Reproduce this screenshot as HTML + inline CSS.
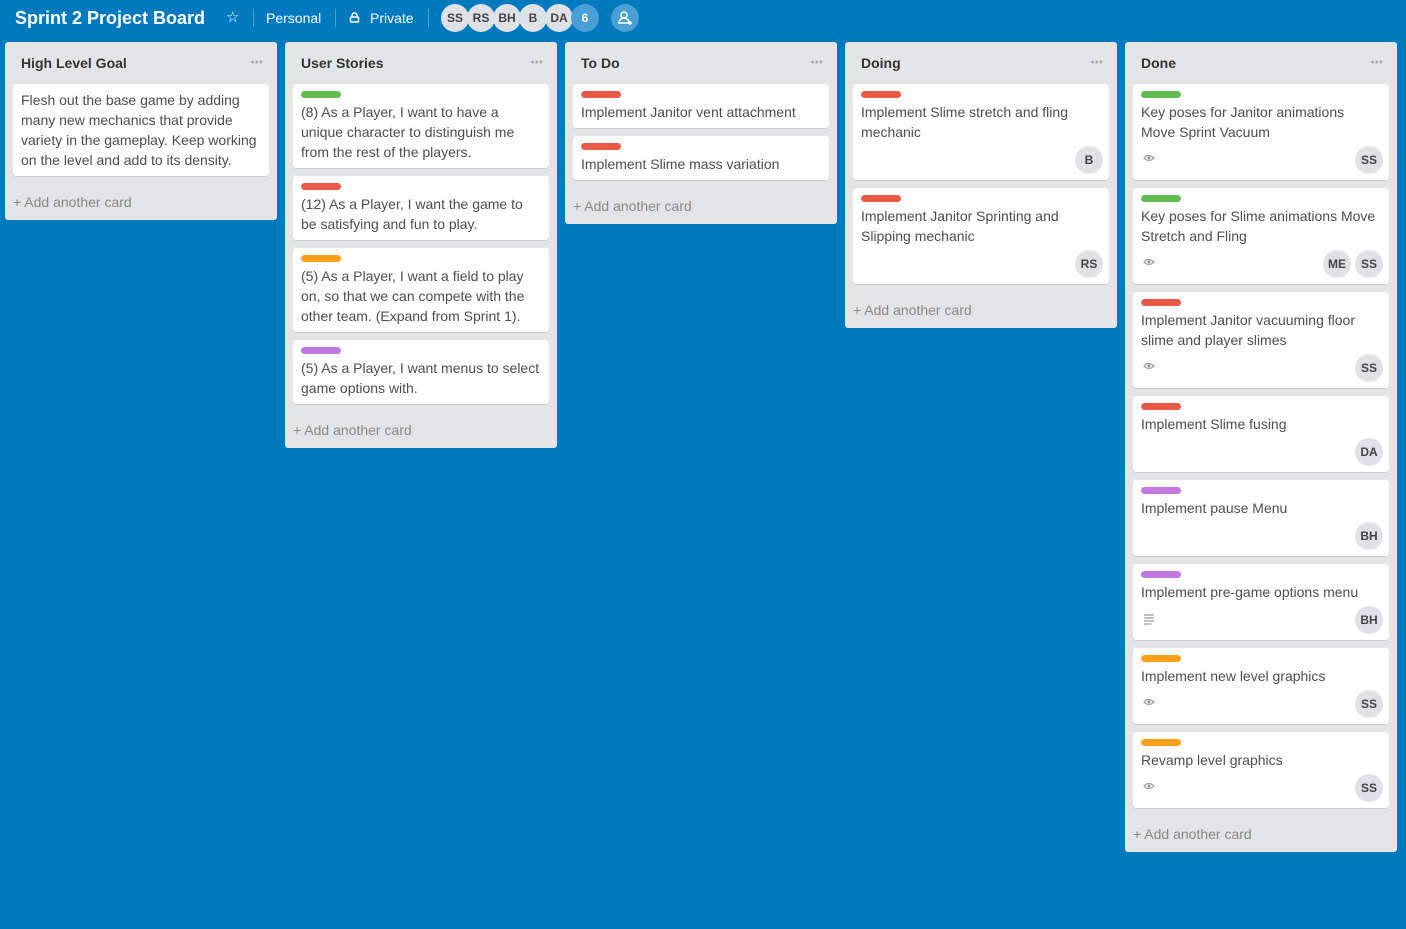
<!DOCTYPE html><html><head><style>
*{box-sizing:border-box;margin:0;padding:0}
body{width:1406px;height:929px;background:#0079bf;font-family:"Liberation Sans",sans-serif;position:relative;overflow:hidden;color:#4d4d4d}
.top{position:absolute;top:0;left:0;height:36px;width:100%;color:#fff;font-size:14px}
.top>*{position:absolute;top:0;line-height:36px}
.title{left:15px;font-size:18px;font-weight:bold}
.sep{width:1px;height:18px;background:rgba(255,255,255,.3);top:9px}
.av{position:absolute;width:28px;height:28px;border-radius:50%;background:#dfe1e6;color:#444;font-size:12px;font-weight:bold;text-align:center;line-height:28px;top:4px}
.list{position:absolute;top:42px;width:272px;background:#e2e4e6;border-radius:3px;padding:0 8px 4px}
.lh{height:42px;line-height:42px;font-weight:bold;font-size:14px;color:#333;padding-left:8px;position:relative}
.lh span{position:absolute;right:6px;top:0;color:#aaa;font-size:7px;letter-spacing:0}
.card{background:#fff;border-radius:3px;padding:6px 8px;margin-bottom:8px;font-size:14px;line-height:20px;box-shadow:0 1px 0 #ccc}
.lab{width:40px;height:7px;border-radius:4px;margin:1px 0 4px}
.g{background:#61bd4f}.r{background:#eb5a46}.o{background:#ff9f1a}.p{background:#c377e0}
.b{height:28px;margin:4px 0 0;position:relative}
.b .a{position:absolute;top:0;width:28px;height:28px;border-radius:50%;background:#dfe1e6;font-size:12px;font-weight:bold;text-align:center;line-height:28px;color:#444}
.eye{position:absolute;left:2px;top:7px}
.add{height:28px;line-height:28px;color:#888;font-size:14px;margin-top:12px}
.card:last-of-type{margin-bottom:0}
</style></head><body>
<div class="top">
<div class="title">Sprint 2 Project Board</div>
<div style="left:226px;font-size:15px">☆</div>
<div class="sep" style="left:253px"></div>
<div style="left:266px">Personal</div>
<div class="sep" style="left:335px"></div>
<svg style="position:absolute;left:349px;top:12px" width="11" height="11" viewBox="0 0 11 11"><path d="M3 5V3.5a2.5 2.5 0 0 1 5 0V5" fill="none" stroke="#fff" stroke-width="1.5"/><rect x="1.5" y="5" width="8" height="5" rx="1" fill="none" stroke="#fff" stroke-width="1.5"/></svg>
<div style="left:370px">Private</div>
<div class="sep" style="left:428px"></div>
</div>
<div class="av" style="left:441px">SS</div>
<div class="av" style="left:467px">RS</div>
<div class="av" style="left:493px">BH</div>
<div class="av" style="left:519px">B</div>
<div class="av" style="left:545px">DA</div>
<div class="av" style="left:571px;background:#4a9fd4;color:#fff">6</div>
<div class="av" style="left:611px;background:#4a9fd4"><svg width="28" height="28" viewBox="0 0 28 28"><circle cx="13" cy="11" r="3" fill="none" stroke="#fff" stroke-width="1.5"/><path d="M8 19a5 5 0 0 1 10 0z" fill="none" stroke="#fff" stroke-width="1.5"/><path d="M19 17v4M17 19h4" stroke="#fff" stroke-width="1.5"/></svg></div>

<svg width="0" height="0" style="position:absolute"><defs><g id="eye"><path d="M1 5Q6 0 11 5Q6 10 1 5z" fill="none" stroke="#999" stroke-width="1.2"/><circle cx="6" cy="5" r="1.5" fill="#999"/></g></defs></svg>

<div class="list" style="left:5px"><div class="lh">High Level Goal<span>●●●</span></div>
<div class="card">Flesh out the base game by adding many new mechanics that provide variety in the gameplay. Keep working on the level and add to its density.</div>
<div class="add">+ Add another card</div></div>

<div class="list" style="left:285px"><div class="lh">User Stories<span>●●●</span></div>
<div class="card"><div class="lab g"></div>(8) As a Player, I want to have a unique character to distinguish me from the rest of the players.</div>
<div class="card"><div class="lab r"></div>(12) As a Player, I want the game to be satisfying and fun to play.</div>
<div class="card"><div class="lab o"></div>(5) As a Player, I want a field to play on, so that we can compete with the other team. (Expand from Sprint 1).</div>
<div class="card"><div class="lab p"></div>(5) As a Player, I want menus to select game options with.</div>
<div class="add">+ Add another card</div></div>

<div class="list" style="left:565px"><div class="lh">To Do<span>●●●</span></div>
<div class="card"><div class="lab r"></div>Implement Janitor vent attachment</div>
<div class="card"><div class="lab r"></div>Implement Slime mass variation</div>
<div class="add">+ Add another card</div></div>

<div class="list" style="left:845px"><div class="lh">Doing<span>●●●</span></div>
<div class="card"><div class="lab r"></div>Implement Slime stretch and fling mechanic<div class="b"><div class="a" style="right:-2px">B</div></div></div>
<div class="card"><div class="lab r"></div>Implement Janitor Sprinting and Slipping mechanic<div class="b"><div class="a" style="right:-2px">RS</div></div></div>
<div class="add">+ Add another card</div></div>

<div class="list" style="left:1125px"><div class="lh">Done<span>●●●</span></div>
<div class="card"><div class="lab g"></div>Key poses for Janitor animations Move Sprint Vacuum<div class="b"><svg class="eye" width="12" height="10"><use href="#eye"/></svg><div class="a" style="right:-2px">SS</div></div></div>
<div class="card"><div class="lab g"></div>Key poses for Slime animations Move Stretch and Fling<div class="b"><svg class="eye" width="12" height="10"><use href="#eye"/></svg><div class="a" style="right:30px">ME</div><div class="a" style="right:-2px">SS</div></div></div>
<div class="card"><div class="lab r"></div>Implement Janitor vacuuming floor slime and player slimes<div class="b"><svg class="eye" width="12" height="10"><use href="#eye"/></svg><div class="a" style="right:-2px">SS</div></div></div>
<div class="card"><div class="lab r"></div>Implement Slime fusing<div class="b"><div class="a" style="right:-2px">DA</div></div></div>
<div class="card"><div class="lab p"></div>Implement pause Menu<div class="b"><div class="a" style="right:-2px">BH</div></div></div>
<div class="card"><div class="lab p"></div>Implement pre-game options menu<div class="b"><svg class="eye" width="12" height="12"><path d="M1 2h10M1 5h10M1 8h10M1 11h7" stroke="#999" stroke-width="1.2"/></svg><div class="a" style="right:-2px">BH</div></div></div>
<div class="card"><div class="lab o"></div>Implement new level graphics<div class="b"><svg class="eye" width="12" height="10"><use href="#eye"/></svg><div class="a" style="right:-2px">SS</div></div></div>
<div class="card"><div class="lab o"></div>Revamp level graphics<div class="b"><svg class="eye" width="12" height="10"><use href="#eye"/></svg><div class="a" style="right:-2px">SS</div></div></div>
<div class="add">+ Add another card</div></div>
</body></html>
